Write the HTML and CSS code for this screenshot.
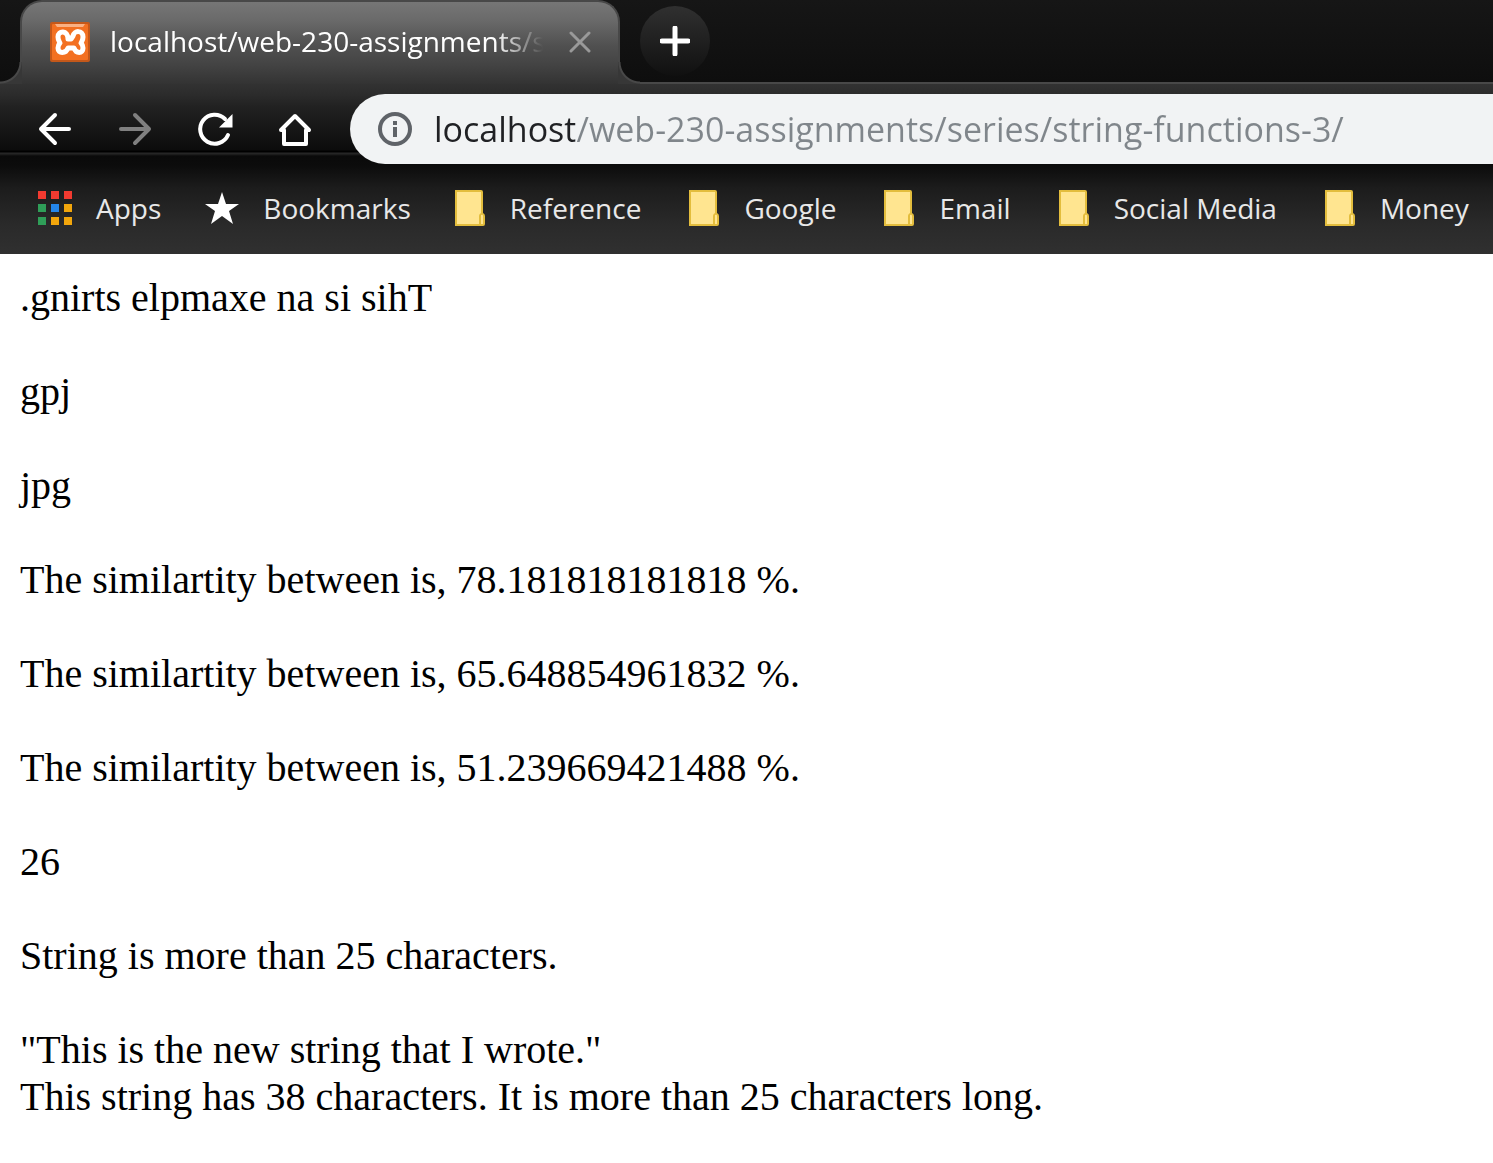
FILE: index.html
```html
<!DOCTYPE html>
<html lang="en">
<head>
<meta charset="utf-8">
<title>localhost/web-230-assignments/series/string-functions-3/</title>
<link rel="stylesheet" href="styles.css">
</head>
<body>
<svg class="defs" width="0" height="0" aria-hidden="true">
  <symbol id="folder" viewBox="0 0 30 36">
    <path d="M0 0h26q2 0 2 2v21q2 1 2 3v8q0 2-2 2H0z" fill="#e3bd3d"/>
    <path d="M2 2h24v21q-2 1-2 3v8H2z" fill="#ffe590"/>
    <path d="M26 25q2-1 2 1v8h-2z" fill="#ffe590"/>
  </symbol>
</svg>
<header class="chrome">
  <div class="strip">
    <div class="tab">
      <svg class="favicon" viewBox="0 0 40 40" aria-hidden="true">
        <rect width="40" height="40" rx="2" fill="#c4581a"/>
        <rect x="2" y="2" width="36" height="36" rx="1" fill="#f37021"/>
        <path d="M5 2h30l-2 3H7z" fill="#f9b184"/>
        <path d="M18 17C18 8 8 8 8 15c0 3 1 4 2 6-2 2-2 4-2 5 0 6 8 6 10 0h6c2 6 9 6 9 0 0-2 0-3-2-5 1-2 2-3 2-6 0-7-9-7-10-1l-2 3z" fill="none" stroke="#fff" stroke-width="5" stroke-linecap="round" stroke-linejoin="round"/>
      </svg>
      <span class="tab-title">localhost/web-230-assignments/s</span>
      <button class="close" type="button" aria-label="Close tab">
        <svg width="22" height="22" viewBox="0 0 22 22"><path d="M2 2l18 18M20 2L2 20" stroke="#999" stroke-width="3" stroke-linecap="round"/></svg>
      </button>
    </div>
    <button class="new-tab" type="button" aria-label="New tab">
      <svg width="30" height="30" viewBox="0 0 30 30"><path d="M15 2v26M2 15h26" stroke="#fff" stroke-width="5" stroke-linecap="round"/></svg>
    </button>
  </div>
  <div class="toolbar">
    <div class="navs">
      <button class="nav" type="button" aria-label="Back">
        <svg width="40" height="40" viewBox="0 0 40 40"><path d="M34 20H6M20 6L6 20l14 14" fill="none" stroke="#fff" stroke-width="4" stroke-linecap="round" stroke-linejoin="round"/></svg>
      </button>
      <button class="nav" type="button" aria-label="Forward">
        <svg width="40" height="40" viewBox="0 0 40 40"><path d="M6 20h28M20 6l14 14-14 14" fill="none" stroke="#808080" stroke-width="4" stroke-linecap="round" stroke-linejoin="round"/></svg>
      </button>
      <button class="nav" type="button" aria-label="Reload">
        <svg width="40" height="40" viewBox="0 0 40 40"><path d="M33 26A14.500 14.500 0 1 1 30 10" fill="none" stroke="#fff" stroke-width="4" stroke-linecap="round"/><path d="M37.500 5v13.500H24z" fill="#fff"/></svg>
      </button>
      <button class="nav" type="button" aria-label="Home">
        <svg width="40" height="40" viewBox="0 0 40 40"><path d="M6 21L20 7l14 14h-3v14H9V21z" fill="none" stroke="#fff" stroke-width="4" stroke-linejoin="round"/></svg>
      </button>
    </div>
    <label class="omnibox">
      <svg width="34" height="34" viewBox="0 0 34 34" aria-hidden="true"><circle cx="17" cy="17" r="15" fill="none" stroke="#5f6368" stroke-width="4"/><path d="M15 15h4v10h-4zM15 9h4v4h-4z" fill="#5f6368"/></svg>
      <input class="url" type="text" aria-label="Address" value="localhost/web-230-assignments/series/string-functions-3/">
    </label>
  </div>
  <nav class="bookmarks" aria-label="Bookmarks">
    <a class="mark" href="#"><svg width="34" height="34" viewBox="0 0 34 34"><path d="M0 0h8v8H0zM13 0h8v8h-8zM26 0h8v8h-8z" fill="#f23a30"/><path d="M0 13h8v8H0zM0 26h8v8H0z" fill="#2f9e58"/><path d="M13 13h8v8h-8z" fill="#2486ea"/><path d="M26 13h8v8h-8zM13 26h8v8h-8zM26 26h8v8h-8z" fill="#f2a60c"/></svg>Apps</a>
    <a class="mark" href="#"><svg width="34" height="34" viewBox="0 0 34 34"><path d="M17 1l4 12h13l-10 7 4 13-11-8-11 8 4-13L0 13h13z" fill="#fff"/></svg>Bookmarks</a>
    <a class="mark folder" href="#"><svg width="30" height="36"><use href="#folder"/></svg>Reference</a>
    <a class="mark folder" href="#"><svg width="30" height="36"><use href="#folder"/></svg>Google</a>
    <a class="mark folder" href="#"><svg width="30" height="36"><use href="#folder"/></svg>Email</a>
    <a class="mark folder" href="#"><svg width="30" height="36"><use href="#folder"/></svg>Social Media</a>
    <a class="mark folder" href="#"><svg width="30" height="36"><use href="#folder"/></svg>Money</a>
  </nav>
</header>
<main class="page">
  <p>.gnirts elpmaxe na si sihT</p>
  <p>gpj</p>
  <p>jpg</p>
  <p>The similartity between is, 78.181818181818 %.</p>
  <p>The similartity between is, 65.648854961832 %.</p>
  <p>The similartity between is, 51.239669421488 %.</p>
  <p>26</p>
  <p>String is more than 25 characters.</p>
  <p>"This is the new string that I wrote."<br>This string has 38 characters. It is more than 25 characters long.</p>
</main>
</body>
</html>
```
FILE: styles.css
```css
* { box-sizing: border-box; }
body { margin: 0; background: #fff; color: #000; }
button { padding: 0; border: 0; background: none; display: flex; align-items: center; justify-content: center; flex: none; }
svg { display: block; flex: none; }
.defs { position: absolute; }

.chrome {
  font-family: "Open Sans", sans-serif;
  overflow: hidden;
  background: linear-gradient(#333 82px, #2c2c2c 94px, #222 106px, #0c0c0c 150px, #000 151px, #000 152px, #282828 153px, #222 154px, #0a0a0a 156px, #0c0c0c 166px, #1c1c1c 188px, #2a2a2a 225px, #303030 254px);
}

.strip {
  display: flex;
  align-items: flex-start;
  gap: 20px;
  height: 82px;
  padding-left: 20px;
  background: linear-gradient(#161616, #0e0e0e);
}
.tab {
  position: relative;
  display: flex;
  align-items: center;
  width: 600px;
  height: 84px;
  padding: 0 27px 2px 28px;
  border: 2px solid #484848;
  border-bottom: 0;
  border-radius: 22px 22px 0 0;
  background: linear-gradient(#767676, #6a6a6a 18px, #505050 44px, #444 62px, #333);
}
.tab::before, .tab::after {
  content: "";
  position: absolute;
  bottom: 0;
  width: 22px;
  height: 22px;
}
.tab::before { right: 100%; background: radial-gradient(circle at 0 0, transparent 19px, #484848 20px 21px, #373737 22px); }
.tab::after { left: 100%; background: radial-gradient(circle at 100% 0, transparent 19px, #484848 20px 21px, #373737 22px); }
.favicon { width: 40px; height: 40px; }
.tab-title {
  flex: 1;
  margin: 0 20px;
  padding-bottom: 2px;
  white-space: nowrap;
  font-size: 28px;
  line-height: 40px;
  color: #fff;
  mask-image: linear-gradient(to left, transparent 6px, #000 54px);
}
.new-tab {
  width: 70px;
  height: 70px;
  margin-top: 6px;
  border-radius: 50%;
  background: linear-gradient(#303030, #101010);
}

.toolbar {
  display: flex;
  align-items: center;
  gap: 35px;
  height: 82px;
  padding: 10px 0 0 35px;
  border-top: 2px solid #484848;
}
.navs { display: flex; gap: 40px; }
.nav { width: 40px; height: 40px; }
.omnibox {
  flex: 1;
  display: flex;
  align-items: center;
  gap: 22px;
  height: 70px;
  padding-left: 28px;
  border-radius: 35px 0 0 35px;
  background: #f1f3f4;
}
.url {
  flex: 1;
  min-width: 0;
  height: 50px;
  padding: 0;
  border: 0;
  outline: 0;
  font-family: inherit;
  font-size: 34px;
  color: transparent;
  background: linear-gradient(to right, #202124 141px, #80868b 141px);
  background-clip: text;
}

.bookmarks {
  display: flex;
  align-items: center;
  gap: 44px;
  height: 90px;
  padding: 0 0 2px 38px;
}
.mark {
  display: flex;
  align-items: center;
  gap: 24px;
  flex: none;
  font-size: 28px;
  line-height: 40px;
  color: #e8e8e8;
  text-decoration: none;
}
.folder { gap: 25px; padding-right: 4px; }

.page {
  padding: 20px 20px 40px;
  font-family: "Liberation Serif", serif;
  font-size: 40px;
  line-height: 47px;
}
.page p { margin: 0 0 47px; }
```
